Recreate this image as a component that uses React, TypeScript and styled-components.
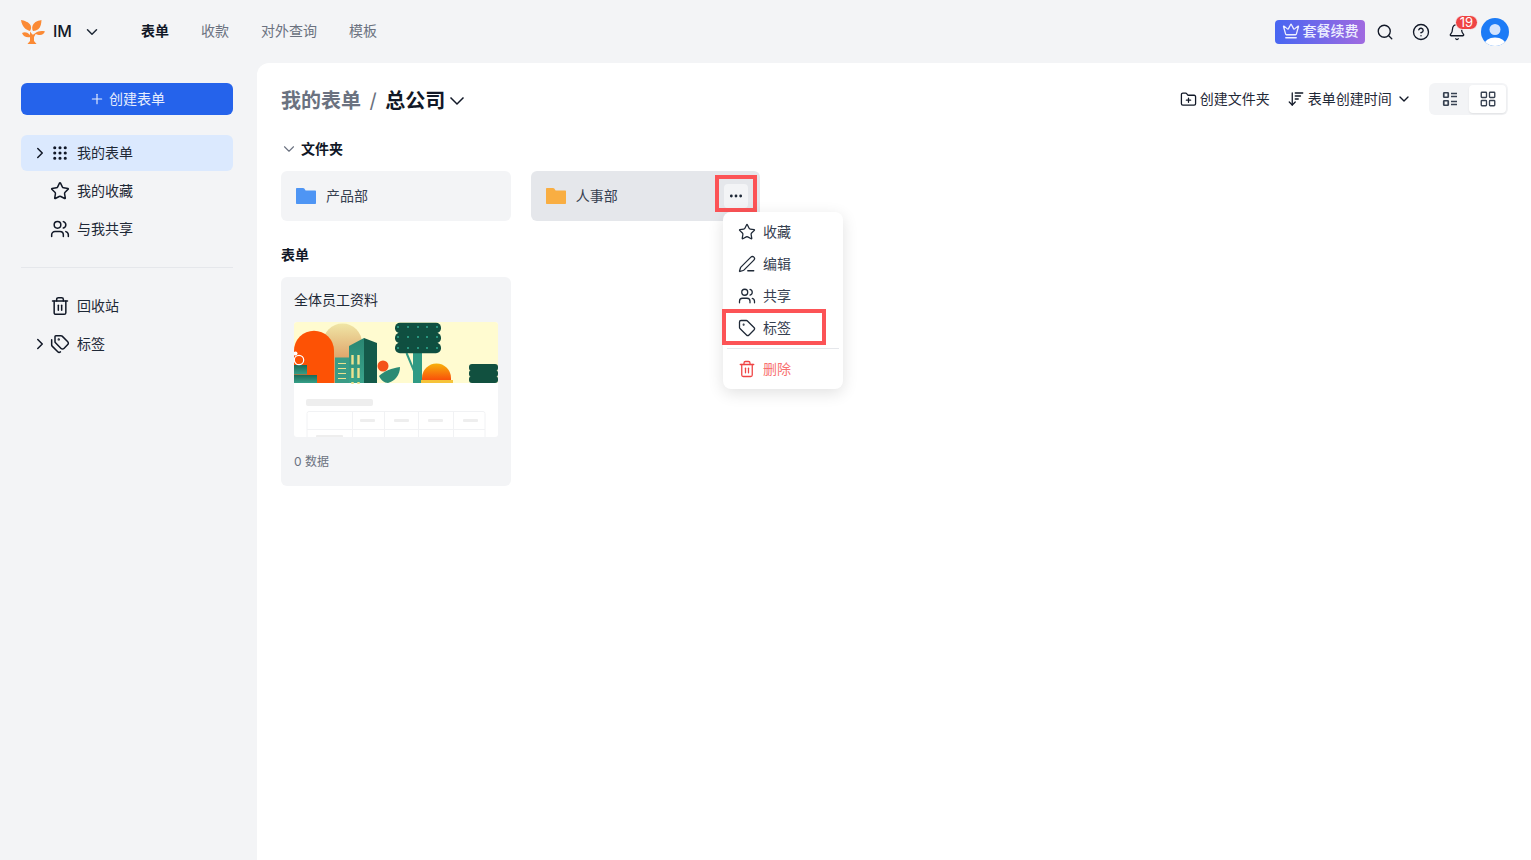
import React from 'react';
import styled, { createGlobalStyle } from 'styled-components';
import {
  ArrowDownWideNarrow,
  Bell,
  ChevronDown,
  ChevronRight,
  CircleHelp,
  Crown,
  Ellipsis,
  FolderPlus,
  Grip,
  LayoutGrid,
  PenLine,
  Plus,
  Search,
  Star,
  Tag,
  Tags,
  Trash2,
  Users,
} from 'lucide-react';

const GlobalStyle = createGlobalStyle`
  * { box-sizing: border-box; }
  html, body { margin: 0; height: 100%; }
  body {
    background: #f3f4f6;
    color: #1f2937;
    font-family: Inter, "Noto Sans CJK SC", "Noto Sans", sans-serif;
    font-size: 14px;
    line-height: 20px;
    overflow: hidden;
  }
`;

function Logo(): React.ReactElement {
  return (
    <svg width="24" height="24" viewBox="0 0 24 24" fill="#fb8a35">
      <path d="M0 0c3 .5 8 2 9.700 5.500.8 2 .3 4-.7 5.500C5 10 1 7 0 0z" />
      <path d="M12 11c-1.500-2.500-.8-5 .5-7 1-1.500 3-3 8-4-.2 3-.7 7-3 9-1.500 1.300-3.500 1.800-5.500 2z" />
      <path d="M1 13c2.500-1.200 5-1 7.500 1.500.6.600.8 1.500 1 2.500-4 .8-7-.3-8.500-4z" />
      <path d="M14 13.500c3-2.500 6.500-3 10-2-1.300 3-4.500 5-10 2z" />
      <path d="M9 11.500l2 2.500c.5.800 1.500.6 2 0l2.500-1.500-2.500 4.500v4l3 3.500H6l3-3.500v-5z" />
    </svg>
  );
}

function Avatar(): React.ReactElement {
  return (
    <svg width="28" height="28" viewBox="0 0 28 28">
      <defs>
        <clipPath id="avatar-clip">
          <circle cx="14" cy="14" r="14" />
        </clipPath>
      </defs>
      <g clipPath="url(#avatar-clip)">
        <rect width="28" height="28" fill="#1c7bf6" />
        <circle cx="14" cy="11.500" r="5.500" fill="#d3e4fd" />
        <ellipse cx="14" cy="27" rx="11" ry="7.500" fill="#ffffff" />
      </g>
    </svg>
  );
}

function Folder({ color }: { color: string }): React.ReactElement {
  return (
    <svg width="20" height="16" viewBox="0 0 20 16" fill={color}>
      <path d="M1 0h6c.6 0 1 .2 1.300.6L9.600 2.400H19c.6 0 1 .4 1 1V15c0 .6-.4 1-1 1H1c-.6 0-1-.4-1-1V1c0-.6.4-1 1-1z" />
    </svg>
  );
}

function ListIcon(): React.ReactElement {
  return (
    <svg width="16" height="16" viewBox="0 0 16 16" fill="none" stroke="#374151" strokeWidth="1.700">
      <rect x="1.750" y="1.750" width="4.500" height="4.500" rx=".6" />
      <rect x="1.750" y="9.750" width="4.500" height="4.500" rx=".6" />
      <path d="M9 2.500h6M9 5.500h6M9 10.500h6M9 13.500h6" />
    </svg>
  );
}

function WideChevron(): React.ReactElement {
  return (
    <svg width="16" height="16" viewBox="0 0 16 16" fill="none" stroke="#111827" strokeWidth="1.500">
      <path d="M1.500 4.500L8 11l6.500-6.500" />
    </svg>
  );
}

function FormPreview(): React.ReactElement {
  const columns = [58, 90, 124, 159];
  return (
    <svg width="204" height="115" viewBox="0 0 204 115">
      <defs>
        <linearGradient id="sand" x1="0" y1="0" x2="0" y2="1">
          <stop offset="0" stopColor="#f0e6a6" />
          <stop offset="0.700" stopColor="#dc985f" />
        </linearGradient>
        <linearGradient id="sun" x1="0" y1="0" x2="0" y2="1">
          <stop offset="0" stopColor="#f7b20c" />
          <stop offset="1" stopColor="#f9500a" />
        </linearGradient>
        <linearGradient id="step" x1="0" y1="0" x2="0" y2="1">
          <stop offset="0" stopColor="#1b6a58" />
          <stop offset="1" stopColor="#36a088" />
        </linearGradient>
        <linearGradient id="tower" x1="0" y1="0" x2="0" y2="1">
          <stop offset="0" stopColor="#2a8672" />
          <stop offset="1" stopColor="#3aa48c" />
        </linearGradient>
        <clipPath id="preview-clip">
          <rect width="204" height="115" rx="3" />
        </clipPath>
      </defs>
      <g clipPath="url(#preview-clip)">
        <rect width="204" height="115" fill="#ffffff" />
        <rect width="204" height="61" fill="#fffbd0" />
        <path d="M29 61V21a19.500 19.500 0 0 1 39 0v40z" fill="url(#sand)" />
        <path d="M0 61V28.700a20 20 0 0 1 40 0V61z" fill="#fd5205" />
        <rect x="0" y="43" width="13" height="9.500" fill="url(#step)" />
        <rect x="0" y="53" width="23" height="8" fill="url(#step)" />
        <circle cx="5" cy="38" r="4.700" fill="none" stroke="#ffffff" strokeWidth="1.200" />
        <circle cx="1.500" cy="31.500" r="2" fill="#ffffff" />
        <rect x="41" y="35.500" width="14" height="25.500" fill="#3b9c86" />
        <path d="M44 41.500h8M44 46.500h8M44 51.500h8M44 56.500h8" stroke="#eee28f" strokeWidth="1.200" />
        <path d="M55 24l15-8v45H55z" fill="url(#tower)" />
        <path d="M70 16l13 5v40H70z" fill="#145a4a" />
        <path d="M58.500 33v9.500M58.500 46v10M64.500 33v9.500M64.500 46v10M58.500 60v2M64.500 60v2" stroke="#eee28f" strokeWidth="2.400" />
        <circle cx="89" cy="44" r="5.500" fill="#f4521b" />
        <path d="M85 54c5-5 13-8 21-9 0 8-5 14-12 16-4 0-7-3-9-7z" fill="#2b8a74" />
        <rect x="119" y="30" width="9" height="31" fill="#2f9a84" />
        <path d="M112.500 31l8 19" stroke="#2f9a84" strokeWidth="2" />
        <rect x="101" y=".7" width="46" height="10.500" rx="5" fill="#0f4f40" />
        <rect x="101" y="10.700" width="46" height="10.500" rx="5" fill="#0f4f40" />
        <rect x="101" y="20.700" width="46" height="10.500" rx="5" fill="#0f4f40" />
        {[5, 15, 26].map((y) =>
          [104, 114, 124, 133, 143].map((x) => <circle key={`${x}-${y}`} cx={x} cy={y} r="1.100" fill="#2fa58c" />),
        )}
        <path d="M128 56a14.500 14.500 0 0 1 29 0v2h-29z" fill="url(#sun)" />
        <rect x="127" y="58" width="32" height="3" fill="#f6c33a" />
        <rect x="175" y="42" width="29" height="7" rx="3" fill="#11503f" />
        <rect x="175" y="48" width="29" height="7" rx="3" fill="#11503f" />
        <rect x="175" y="54" width="29" height="7" rx="3" fill="#11503f" />
        <rect x="12" y="77" width="67" height="7" rx="2" fill="#eeeeee" />
        <rect x="13" y="89.500" width="178" height="40" rx="2" fill="none" stroke="#f1f2f4" />
        <path d="M13 107.500h178" stroke="#f1f2f4" />
        {columns.map((x) => (
          <path key={x} d={`M${x}.5 89v26`} stroke="#f1f2f4" />
        ))}
        {[66, 100, 134, 169].map((x) => (
          <rect key={x} x={x} y="97" width="15" height="3" rx="1" fill="#eeeeee" />
        ))}
        <rect x="22" y="113" width="27" height="3" rx="1" fill="#eeeeee" />
      </g>
    </svg>
  );
}

function App(): React.ReactElement {
  return (
    <>
      <GlobalStyle />
      <Page>
        <TopBar>
          <Brand>
            <Logo />
            <BrandName>IM</BrandName>
            <ChevronDown size={18} strokeWidth={2} color="#1f2937" />
          </Brand>
          <TopNav>
            <TopLink $active>表单</TopLink>
            <TopLink>收款</TopLink>
            <TopLink>对外查询</TopLink>
            <TopLink>模板</TopLink>
          </TopNav>
          <TopActions>
            <RenewButton>
              <Crown size={18} strokeWidth={1.7} />
              套餐续费
            </RenewButton>
            <TopIcon>
              <Search size={18} strokeWidth={1.8} />
            </TopIcon>
            <TopIcon>
              <CircleHelp size={18} strokeWidth={1.8} />
            </TopIcon>
            <TopIcon>
              <Bell size={18} strokeWidth={1.7} />
              <Badge>19</Badge>
            </TopIcon>
            <AvatarWrap>
              <Avatar />
            </AvatarWrap>
          </TopActions>
        </TopBar>
        <Body>
          <Sidebar>
            <CreateButton>
              <Plus size={16} strokeWidth={1.7} />
              创建表单
            </CreateButton>
            <SideGroup>
              <SideRow $active>
                <Caret>
                  <ChevronRight size={18} strokeWidth={2} />
                </Caret>
                <DotsIcon size={18} strokeWidth={2.2} />
                <SideLabel>我的表单</SideLabel>
              </SideRow>
              <SideRow>
                <Caret />
                <Star size={20} strokeWidth={1.8} />
                <SideLabel>我的收藏</SideLabel>
              </SideRow>
              <SideRow>
                <Caret />
                <Users size={20} strokeWidth={1.8} />
                <SideLabel>与我共享</SideLabel>
              </SideRow>
            </SideGroup>
            <SideDivider />
            <SideGroup>
              <SideRow>
                <Caret />
                <Trash2 size={20} strokeWidth={1.8} />
                <SideLabel>回收站</SideLabel>
              </SideRow>
              <SideRow>
                <Caret>
                  <ChevronRight size={18} strokeWidth={2} />
                </Caret>
                <Tags size={20} strokeWidth={1.8} />
                <SideLabel>标签</SideLabel>
              </SideRow>
            </SideGroup>
          </Sidebar>
          <Main>
            <MainHead>
              <Breadcrumb>
                <Crumb>我的表单</Crumb>
                <Slash>/</Slash>
                <CurrentCrumb>总公司</CurrentCrumb>
                <WideChevron />
              </Breadcrumb>
              <HeadActions>
                <HeadAction>
                  <FolderPlus size={17} strokeWidth={1.8} />
                  创建文件夹
                </HeadAction>
                <HeadAction>
                  <ArrowDownWideNarrow size={18} strokeWidth={1.7} />
                  表单创建时间
                  <SortCaret size={16} strokeWidth={2} />
                </HeadAction>
                <ViewToggle>
                  <ViewOption>
                    <ListIcon />
                  </ViewOption>
                  <ViewOption $active>
                    <LayoutGrid size={18} strokeWidth={1.8} color="#374151" />
                  </ViewOption>
                </ViewToggle>
              </HeadActions>
            </MainHead>
            <FolderHeading>
              <ChevronDown size={18} strokeWidth={1.5} color="#6b7280" />
              文件夹
            </FolderHeading>
            <FolderRow>
              <FolderCard>
                <Folder color="#4e95f4" />
                产品部
              </FolderCard>
              <FolderCard $hover>
                <Folder color="#f9ae42" />
                人事部
                <MoreButton>
                  <Ellipsis size={16} strokeWidth={2.2} color="#1f2937" />
                </MoreButton>
                <Menu>
                  <MenuItem>
                    <Star size={18} strokeWidth={1.7} />
                    收藏
                  </MenuItem>
                  <MenuItem>
                    <PenLine size={18} strokeWidth={1.7} />
                    编辑
                  </MenuItem>
                  <MenuItem>
                    <Users size={18} strokeWidth={1.7} />
                    共享
                  </MenuItem>
                  <MenuItem $marked>
                    <Tag size={18} strokeWidth={1.7} />
                    标签
                  </MenuItem>
                  <MenuDivider />
                  <MenuItem $danger>
                    <Trash2 size={18} strokeWidth={1.7} />
                    删除
                  </MenuItem>
                </Menu>
              </FolderCard>
            </FolderRow>
            <FormHeading>表单</FormHeading>
            <FormCard>
              <FormTitle>全体员工资料</FormTitle>
              <FormPreview />
              <FormCount>0 数据</FormCount>
            </FormCard>
          </Main>
        </Body>
      </Page>
    </>
  );
}

export default App;

const Page = styled.div`
  display: flex;
  flex-direction: column;
  height: 860px;
`;

const TopBar = styled.header`
  display: flex;
  align-items: center;
  height: 63px;
  padding: 0 22px 0 21px;
`;

const Brand = styled.div`
  display: flex;
  align-items: center;
  width: 120px;
`;

const BrandName = styled.span`
  width: 30px;
  margin: -2px 0 0 8px;
  color: #111827;
  font-size: 16px;
  font-weight: 500;
`;

const TopNav = styled.nav`
  display: flex;
  gap: 32px;
  margin-top: -2px;
`;

const TopLink = styled.a<{ $active?: boolean }>`
  color: ${({ $active }) => ($active ? '#111827' : '#6b7280')};
  font-weight: ${({ $active }) => ($active ? 700 : 400)};
`;

const TopActions = styled.div`
  display: flex;
  align-items: center;
  margin-left: auto;
`;

const RenewButton = styled.button`
  display: flex;
  align-items: center;
  justify-content: center;
  gap: 3px;
  width: 90px;
  height: 24px;
  margin-right: 2px;
  padding: 0 0 1px;
  border: 0;
  border-radius: 4px;
  background: linear-gradient(90deg, #4766f2, #a06ae0);
  color: #eef0ff;
  font: inherit;
  font-weight: 500;
`;

const TopIcon = styled.div`
  position: relative;
  display: flex;
  align-items: center;
  justify-content: center;
  width: 36px;
  height: 28px;
  color: #111827;
`;

const Badge = styled.span`
  position: absolute;
  top: -3px;
  left: 16px;
  min-width: 23px;
  height: 15px;
  border: 1px solid #f3f4f6;
  border-radius: 8px;
  background: #ef4444;
  color: #ffffff;
  font-size: 13px;
  line-height: 13px;
  text-align: center;
`;

const AvatarWrap = styled.div`
  display: flex;
  margin-left: 6px;
`;

const Body = styled.div`
  display: flex;
  flex: 1;
  min-height: 0;
`;

const Sidebar = styled.aside`
  width: 257px;
  padding: 20px 24px 0 21px;
`;

const CreateButton = styled.button`
  display: flex;
  align-items: center;
  justify-content: center;
  gap: 4px;
  width: 100%;
  height: 32px;
  padding: 0;
  border: 0;
  border-radius: 6px;
  background: #2563eb;
  color: #e6edfd;
  font: inherit;
`;

const SideGroup = styled.div`
  display: flex;
  flex-direction: column;
  gap: 2px;
  margin-top: 20px;
`;

const SideRow = styled.div<{ $active?: boolean }>`
  display: flex;
  align-items: center;
  height: 36px;
  padding-left: 11px;
  border-radius: 6px;
  background: ${({ $active }) => ($active ? '#dbe9fe' : 'transparent')};
  color: #111827;
  & > svg {
    flex: none;
  }
`;

const SideLabel = styled.span`
  margin-left: 7px;
  color: #1f2937;
`;

const Caret = styled.span`
  display: flex;
  flex: none;
  width: 18px;
  & > svg {
    flex: none;
    margin-left: -1px;
  }
`;

const DotsIcon = styled(Grip)`
  margin: 0 1px;
`;

const SideDivider = styled.div`
  height: 1px;
  margin-top: 20px;
  background: #e5e7eb;
`;

const Main = styled.main`
  flex: 1;
  padding: 20px 22.7px 0 24px;
  border-top-left-radius: 12px;
  background: #ffffff;
`;

const MainHead = styled.div`
  display: flex;
  align-items: center;
  justify-content: space-between;
  height: 32px;
`;

const Breadcrumb = styled.div`
  display: flex;
  align-items: center;
  padding-top: 3px;
  font-size: 20px;
  font-weight: 600;
`;

const Crumb = styled.span`
  color: #6b7280;
`;

const Slash = styled.span`
  margin: 0 8.500px 0 8.500px;
  color: #6b7280;
  font-weight: 400;
`;

const CurrentCrumb = styled.span`
  margin-right: 4px;
  color: #111827;
  font-weight: 700;
`;

const HeadActions = styled.div`
  display: flex;
  align-items: center;
  gap: 17px;
`;

const HeadAction = styled.div`
  display: flex;
  align-items: center;
  gap: 3px;
  color: #1f2937;
  & > svg {
    color: #111827;
  }
`;

const SortCaret = styled(ChevronDown)`
  margin-left: 1px;
`;

const ViewToggle = styled.div`
  display: flex;
  width: 79px;
  height: 32px;
  margin-left: 0.5px;
  padding: 2px;
  border-radius: 6px;
  background: #f3f4f6;
`;

const ViewOption = styled.div<{ $active?: boolean }>`
  display: flex;
  flex: 1;
  align-items: center;
  justify-content: center;
  border-radius: 4px;
  background: ${({ $active }) => ($active ? '#ffffff' : 'transparent')};
  box-shadow: ${({ $active }) => ($active ? '0 1px 2px rgba(0, 0, 0, 0.08)' : 'none')};
`;

const FolderHeading = styled.h3`
  display: flex;
  align-items: center;
  gap: 3px;
  height: 20px;
  margin: 24px 0 0;
  color: #111827;
  font-size: 14px;
  font-weight: 700;
  & > svg {
    margin-left: -1px;
  }
`;

const FolderRow = styled.div`
  display: flex;
  gap: 20px;
  margin-top: 12px;
`;

const FolderCard = styled.div<{ $hover?: boolean }>`
  position: relative;
  display: flex;
  align-items: center;
  gap: 10px;
  width: 229.7px;
  height: 50px;
  padding-left: 15px;
  border-radius: 6px;
  background: ${({ $hover }) => ($hover ? '#e5e7eb' : '#f3f4f6')};
  color: #374151;
`;

const MoreButton = styled.div`
  position: absolute;
  top: 13px;
  left: 193.3px;
  display: flex;
  align-items: center;
  justify-content: center;
  width: 24px;
  height: 24px;
  border-radius: 4px;
  background: #f3f4f6;
  &::after {
    content: '';
    position: absolute;
    inset: -9px -9px -4px;
    border: 4px solid #fc5356;
  }
`;

const Menu = styled.div`
  position: absolute;
  top: 41px;
  left: 192.3px;
  z-index: 2;
  width: 120px;
  padding: 4px 0;
  border-radius: 8px;
  background: #ffffff;
  box-shadow: 0 4px 16px rgba(0, 0, 0, 0.12);
`;

const MenuItem = styled.div<{ $danger?: boolean; $marked?: boolean }>`
  position: relative;
  display: flex;
  align-items: center;
  gap: 7px;
  height: 32px;
  padding-left: 15px;
  color: ${({ $danger }) => ($danger ? '#f87171' : '#374151')};
  & > svg {
    color: ${({ $danger }) => ($danger ? '#ef4444' : '#1f2937')};
  }
  ${({ $marked }) =>
    $marked &&
    `&::after {
      content: '';
      position: absolute;
      top: -3px;
      left: -1px;
      width: 104px;
      height: 36px;
      box-sizing: border-box;
      border: 4px solid #fc5356;
    }`}
`;

const MenuDivider = styled.div`
  height: 1px;
  margin: 4px;
  background: #e5e7eb;
`;

const FormHeading = styled.h3`
  height: 20px;
  margin: 24px 0 0;
  color: #111827;
  font-size: 14px;
  font-weight: 700;
`;

const FormCard = styled.div`
  display: flex;
  flex-direction: column;
  width: 229.7px;
  height: 209px;
  margin-top: 12px;
  padding: 13px 13px 0;
  border-radius: 6px;
  background: #f3f4f6;
`;

const FormTitle = styled.div`
  height: 20px;
  margin-bottom: 12px;
  color: #1f2937;
`;

const FormCount = styled.div`
  margin-top: 15px;
  color: #6b7280;
  font-size: 12px;
`;
